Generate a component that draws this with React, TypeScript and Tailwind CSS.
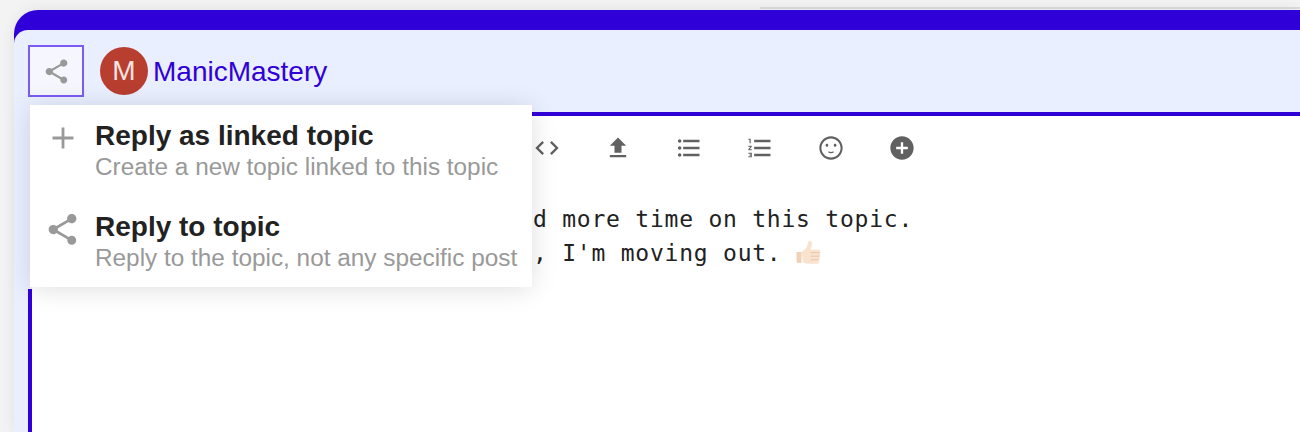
import React from 'react';

const SHARE_PATH =
  'M18 16.08c-.76 0-1.44.3-1.96.77L8.91 12.7c.05-.23.09-.46.09-.7s-.04-.47-.09-.7l7.05-4.11c.54.5 1.25.81 2.04.81 1.66 0 3-1.34 3-3s-1.34-3-3-3-3 1.34-3 3c0 .24.04.47.09.7L8.04 9.81C7.5 9.31 6.79 9 6 9c-1.66 0-3 1.34-3 3s1.34 3 3 3c.79 0 1.5-.31 2.04-.81l7.12 4.16c-.05.21-.08.43-.08.65 0 1.61 1.31 2.92 2.92 2.92 1.61 0 2.92-1.31 2.92-2.92s-1.31-2.92-2.92-2.92z';

const toolbarPaths = [
  'M9.4 16.6L4.8 12l4.6-4.6L8 6l-6 6 6 6 1.4-1.4zm5.2 0l4.6-4.6-4.6-4.6L16 6l6 6-6 6-1.4-1.4z',
  'M9 16h6v-6h4l-7-7-7 7h4zm-4 2h14v2H5z',
  'M4 10.5c-.83 0-1.5.67-1.5 1.5s.67 1.5 1.5 1.5 1.5-.67 1.5-1.5-.67-1.5-1.5-1.5zm0-6c-.83 0-1.5.67-1.5 1.5S3.17 7.5 4 7.5 5.5 6.83 5.5 6 4.83 4.5 4 4.5zm0 12c-.83 0-1.5.68-1.5 1.5s.68 1.5 1.5 1.5 1.5-.68 1.5-1.5-.67-1.5-1.5-1.5zM7 19h14v-2H7v2zm0-6h14v-2H7v2zm0-8v2h14V5H7z',
  'M2 17h2v.5H3v1h1v.5H2v1h3v-4H2v1zm1-9h1V4H2v1h1v3zm-1 3h1.8L2 13.1v.9h3v-1H3.2L5 10.9V10H2v1zm5-6v2h14V5H7zm0 14h14v-2H7v2zm0-6h14v-2H7v2z',
  'M11.99 2C6.47 2 2 6.48 2 12s4.47 10 9.99 10C17.52 22 22 17.52 22 12S17.52 2 11.99 2zM12 20.200c-4.530 0-8.200-3.670-8.200-8.200S7.470 3.800 12 3.800s8.200 3.670 8.200 8.200-3.670 8.200-8.200 8.200zM8.500 11c.7 0 1.200-.55 1.200-1.300S9.200 8.400 8.500 8.400s-1.200.55-1.200 1.300.5 1.300 1.200 1.300zm7 0c.7 0 1.200-.55 1.200-1.300s-.5-1.300-1.200-1.300-1.200.55-1.200 1.300.5 1.300 1.200 1.300zM9.500 15.600c.6.5 1.500.8 2.500.8s1.900-.3 2.500-.8l-.6-.8c-.5.4-1.100.6-1.900.6s-1.400-.2-1.900-.6z',
  'M12 2C6.48 2 2 6.48 2 12s4.48 10 10 10 10-4.48 10-10S17.52 2 12 2zm5 11h-4v4h-2v-4H7v-2h4V7h2v4h4v2z',
];

const Icon = ({ d, className }: { d: string; className: string }) => (
  <svg viewBox="0 0 24 24" fill="currentColor" className={className}>
    <path d={d} />
  </svg>
);

const ThumbsUp = () => (
  <svg viewBox="0 0 26 26" className="inline-block w-[26px] h-[26px] ml-[13px] align-[-5px]">
    <path d="M1.500 12h5v11h-3.500c-.9 0-1.500-.7-1.500-1.500z" fill="#f0d2b8" />
    <path
      d="M6.500 12c3-1.500 5-4 6-7 .4-1.300.4-2.500.9-3.500.6-1.100 2.800-.9 3.300.7.600 2-.2 4.800-1.200 7.300h7.500c1.700 0 2.500 1 2.500 2.200 0 1-.3 1.600-.9 2 .6.500.8 1.100.8 1.800 0 .9-.4 1.500-1 1.900.4.500.6 1 .5 1.700-.1.800-.5 1.300-1.100 1.600.2.400.3.800.2 1.200-.2 1.300-1 1.900-2.400 1.900h-7.500c-2 0-3.600-.6-6.100-1.300z"
      fill="#f9e3cf"
    />
    <path d="M15.500 12.700h9M15.500 16.200h8.500M16 19.700h7" stroke="#e5c3a8" strokeWidth="0.9" fill="none" />
  </svg>
);

const MenuItem = ({
  icon,
  title,
  subtitle,
}: {
  icon: React.ReactNode;
  title: string;
  subtitle: string;
}) => (
  <div className="flex items-start">
    <div className="w-[65px] h-[36px] flex items-center justify-center shrink-0">{icon}</div>
    <div className="font-['Liberation_Sans',sans-serif]">
      <div className="text-[28px] leading-[32px] font-bold text-[#222222]">{title}</div>
      <div className="text-[24.35px] leading-[30px] text-[#999999] whitespace-nowrap">{subtitle}</div>
    </div>
  </div>
);

export default function App() {
  return (
    <div className="relative w-[1300px] h-[432px] overflow-hidden bg-[#f3f3f3] pt-[10px] pl-[14px]">
      <div className="absolute top-[7px] left-[760px] right-0 h-[2px] bg-[#dcdcdc]" />

      <div className="relative h-[422px] rounded-tl-[24px] bg-[#3000d9] pt-[20px] shadow-[0_0_14px_rgba(0,0,0,0.08)]">
        <div className="h-[402px] rounded-tl-[14px] bg-[#e9efff]">
          <header className="h-[86px] border-b-4 border-[#3000d9] flex items-start pt-[15px] pl-[14px] font-['Liberation_Sans',sans-serif]">
            <button className="w-[56px] h-[52px] border-2 border-[#7a5cf5] bg-[#f6f6fe] flex items-center justify-center">
              <Icon d={SHARE_PATH} className="w-[29px] h-[29px] text-[#999999]" />
            </button>
            <div className="ml-[16px] mt-[2px] w-[48px] h-[48px] rounded-full bg-[#b83e30] flex items-center justify-center text-[28px] text-[#f8e4e0]">
              M
            </div>
            <span className="ml-[5px] mt-[9px] text-[28px] leading-[36px] text-[#3000d9]">ManicMastery</span>
          </header>

          <div className="ml-[14px] h-[316px] border-l-4 border-[#3000d9] bg-white">
            <div className="flex gap-[43px] pl-[501px] pt-[18px]">
              {toolbarPaths.map((d) => (
                <Icon key={d} d={d} className="w-[28px] h-[28px] text-[#616161]" />
              ))}
            </div>
            <div className="mt-[40px] pl-[501px] text-[23px] leading-[34px] tracking-[0.77px] text-[#222222] font-['DejaVu_Sans_Mono',monospace] whitespace-pre">
              <div>d more time on this topic.</div>
              <div>
                , I'm moving out.
                <ThumbsUp />
              </div>
            </div>
          </div>
        </div>
      </div>

      {/* the popup's backdrop hides the editor border next to the menu */}
      <div className="absolute left-[14px] top-[112px] w-[18px] h-[177px] bg-[#e9efff]" />

      <div className="absolute left-[30px] top-[105px] w-[502px] h-[182px] bg-white pt-[15px] flex flex-col gap-[29px] shadow-[0_2px_24px_rgba(0,0,0,0.13)]">
        <MenuItem
          icon={
            <svg viewBox="0 0 24 24" className="w-[24px] h-[24px] text-[#999999]" fill="none" stroke="currentColor" strokeWidth="2.800">
              <path d="M12 1.500v21M1.500 12h21" />
            </svg>
          }
          title="Reply as linked topic"
          subtitle="Create a new topic linked to this topic"
        />
        <MenuItem
          icon={<Icon d={SHARE_PATH} className="w-[37px] h-[37px] text-[#999999]" />}
          title="Reply to topic"
          subtitle="Reply to the topic, not any specific post"
        />
      </div>
    </div>
  );
}
